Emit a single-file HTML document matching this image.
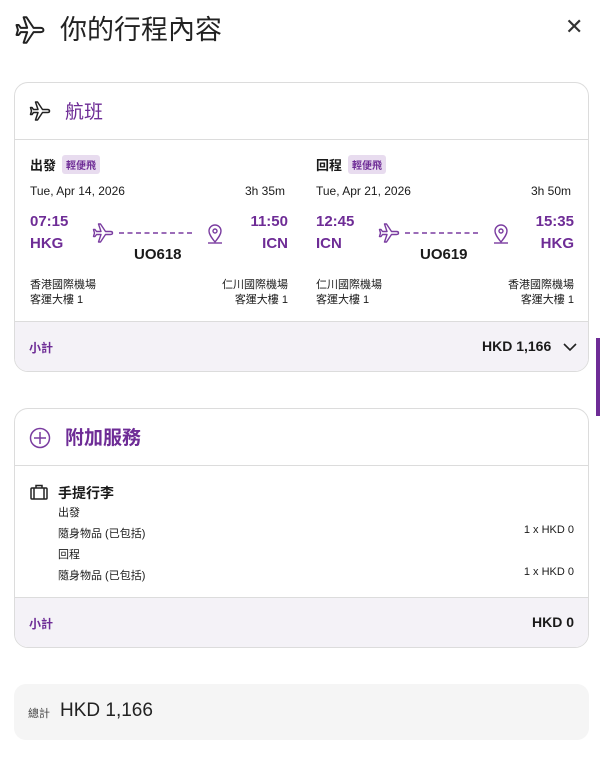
<!DOCTYPE html>
<html><head><meta charset="utf-8"><style>
*{margin:0;padding:0;box-sizing:border-box}
body{width:600px;height:761px;background:#fff;font-family:"Liberation Sans","Noto Sans CJK TC",sans-serif;color:#1a1a1a;position:relative;overflow:hidden}
.a{position:absolute;white-space:nowrap}
.card{position:absolute;left:14px;width:575px;border:1px solid #dcdcdc;border-radius:14px;overflow:hidden;background:#fff}
.hd{height:57px;border-bottom:1px solid #dcdcdc;position:relative}
.sub{position:absolute;left:0;right:0;bottom:0;height:50px;background:#f4f2f7;border-top:1px solid #dcdcdc}
.p{color:#6e2c96}
.tag{display:inline-block;background:#e8dcef;color:#6e2c96;font-size:10px;padding:2px 4px;border-radius:3px;font-weight:bold;vertical-align:1px;margin-left:6px}
.b{font-weight:bold}
.s11{font-size:11px}
.d{font-size:12px}
</style></head><body>
<svg class="a" style="left:13px;top:13px" width="34" height="34" viewBox="0 0 24 24" fill="none" stroke="#222" stroke-width="1.4" stroke-linejoin="round"><path d="M21.5 12c0-1-1-1.5-2-1.5h-5L9.5 3H7.5l2.5 7.5H5.5L4 8.5H2.5l1 3.5-1 3.5H4l1.5-2H10L7.5 21h2l5-7.5h5c1 0 2-.5 2-1.5z"/></svg>
<div class="a" style="left:60px;top:8px;font-size:27px;color:#222">你的行程內容</div>
<div class="a" style="left:565px;top:14px;font-size:22px;color:#333">✕</div>

<div class="card" style="top:82px;height:290px">
 <div class="hd">
  <svg class="a" style="left:13px;top:16px" width="24" height="24" viewBox="0 0 24 24" fill="none" stroke="#222" stroke-width="1.5" stroke-linejoin="round"><path d="M21.5 12c0-1-1-1.5-2-1.5h-5L9.5 3H7.5l2.5 7.5H5.5L4 8.5H2.5l1 3.5-1 3.5H4l1.5-2H10L7.5 21h2l5-7.5h5c1 0 2-.5 2-1.5z"/></svg>
  <div class="a p" style="left:50px;top:14px;font-size:19px">航班</div>
 </div>
 <div class="a b" style="left:15px;top:72px;font-size:13px">出發<span class="tag">輕便飛</span></div>
 <div class="a d" style="left:15px;top:101px">Tue, Apr 14, 2026</div>
 <div class="a d" style="left:230px;top:101px">3h 35m</div>
 <div class="a b p" style="left:15px;top:128px;font-size:15px;line-height:22px">07:15<br>HKG</div>
 <div class="a b p" style="left:233px;top:128px;font-size:15px;line-height:22px;text-align:right;width:40px">11:50<br>ICN</div>
 <svg class="a" style="left:76px;top:138px" width="140" height="26" viewBox="0 0 140 26" fill="none" stroke="#7a3ca0" stroke-width="1.4" stroke-linejoin="round"><path d="M21.5 12c0-1-1-1.5-2-1.5h-5L9.5 3H7.5l2.5 7.5H5.5L4 8.5H2.5l1 3.5-1 3.5H4l1.5-2H10L7.5 21h2l5-7.5h5c1 0 2-.5 2-1.5z"/><path d="M28 12H104" stroke-dasharray="5 3.5"/><path d="M124 21c-4-5-6-8-6-11a6 6 0 0112 0c0 3-2 6-6 11z"/><circle cx="124" cy="10" r="2"/><path d="M117 22h14"/></svg>
 <div class="a b" style="left:119px;top:163px;font-size:15px">UO618</div>
 <div class="a s11" style="left:15px;top:195px;line-height:15px">香港國際機場<br>客運大樓 1</div>
 <div class="a s11" style="left:173px;top:195px;line-height:15px;text-align:right;width:100px">仁川國際機場<br>客運大樓 1</div>

 <div class="a b" style="left:301px;top:72px;font-size:13px">回程<span class="tag">輕便飛</span></div>
 <div class="a d" style="left:301px;top:101px">Tue, Apr 21, 2026</div>
 <div class="a d" style="left:516px;top:101px">3h 50m</div>
 <div class="a b p" style="left:301px;top:128px;font-size:15px;line-height:22px">12:45<br>ICN</div>
 <div class="a b p" style="left:519px;top:128px;font-size:15px;line-height:22px;text-align:right;width:40px">15:35<br>HKG</div>
 <svg class="a" style="left:362px;top:138px" width="140" height="26" viewBox="0 0 140 26" fill="none" stroke="#7a3ca0" stroke-width="1.4" stroke-linejoin="round"><path d="M21.5 12c0-1-1-1.5-2-1.5h-5L9.5 3H7.5l2.5 7.5H5.5L4 8.5H2.5l1 3.5-1 3.5H4l1.5-2H10L7.5 21h2l5-7.5h5c1 0 2-.5 2-1.5z"/><path d="M28 12H104" stroke-dasharray="5 3.5"/><path d="M124 21c-4-5-6-8-6-11a6 6 0 0112 0c0 3-2 6-6 11z"/><circle cx="124" cy="10" r="2"/><path d="M117 22h14"/></svg>
 <div class="a b" style="left:405px;top:163px;font-size:15px">UO619</div>
 <div class="a s11" style="left:301px;top:195px;line-height:15px">仁川國際機場<br>客運大樓 1</div>
 <div class="a s11" style="left:459px;top:195px;line-height:15px;text-align:right;width:100px">香港國際機場<br>客運大樓 1</div>

 <div class="sub">
  <div class="a p b" style="left:14px;top:17px;font-size:12px">小計</div>
  <div class="a b" style="left:467px;top:16px;font-size:14px">HKD 1,166</div>
  <svg class="a" style="left:548px;top:20px" width="14" height="10" viewBox="0 0 14 10" fill="none" stroke="#222" stroke-width="1.6"><path d="M1 2l6 6 6-6"/></svg>
 </div>
</div>

<div class="a" style="left:596px;top:338px;width:4px;height:78px;background:#6e2c96"></div>

<div class="card" style="top:408px;height:240px">
 <div class="hd">
  <svg class="a" style="left:14px;top:18px" width="22" height="22" viewBox="0 0 22 22" fill="none" stroke="#7a3ca0" stroke-width="1.5"><circle cx="11" cy="11" r="9.5"/><path d="M11 5v12M5 11h12"/></svg>
  <div class="a p b" style="left:50px;top:14px;font-size:19px">附加服務</div>
 </div>
 <svg class="a" style="left:15px;top:75px" width="18" height="16" viewBox="0 0 18 16" fill="none" stroke="#222" stroke-width="1.5"><rect x="1" y="4" width="16" height="11" rx="1"/><path d="M6 4V1.5h6V4M4 4v11M14 4v11"/></svg>
 <div class="a b" style="left:43px;top:74px;font-size:14px">手提行李</div>
 <div class="a s11" style="left:43px;top:95px">出發</div>
 <div class="a s11" style="left:43px;top:116px">隨身物品 (已包括)</div>
 <div class="a s11" style="left:459px;top:115px;width:100px;text-align:right">1 x HKD 0</div>
 <div class="a s11" style="left:43px;top:137px">回程</div>
 <div class="a s11" style="left:43px;top:158px">隨身物品 (已包括)</div>
 <div class="a s11" style="left:459px;top:157px;width:100px;text-align:right">1 x HKD 0</div>
 <div class="sub">
  <div class="a p b" style="left:14px;top:17px;font-size:12px">小計</div>
  <div class="a b" style="left:459px;top:16px;font-size:14px;width:100px;text-align:right">HKD 0</div>
 </div>
</div>

<div class="a" style="left:14px;top:684px;width:575px;height:56px;background:#f5f5f5;border-radius:12px">
 <div class="a" style="left:14px;top:21px;font-size:11px;color:#444">總計</div>
 <div class="a" style="left:46px;top:16px;font-size:19px;color:#222">HKD 1,166</div>
</div>
</body></html>
